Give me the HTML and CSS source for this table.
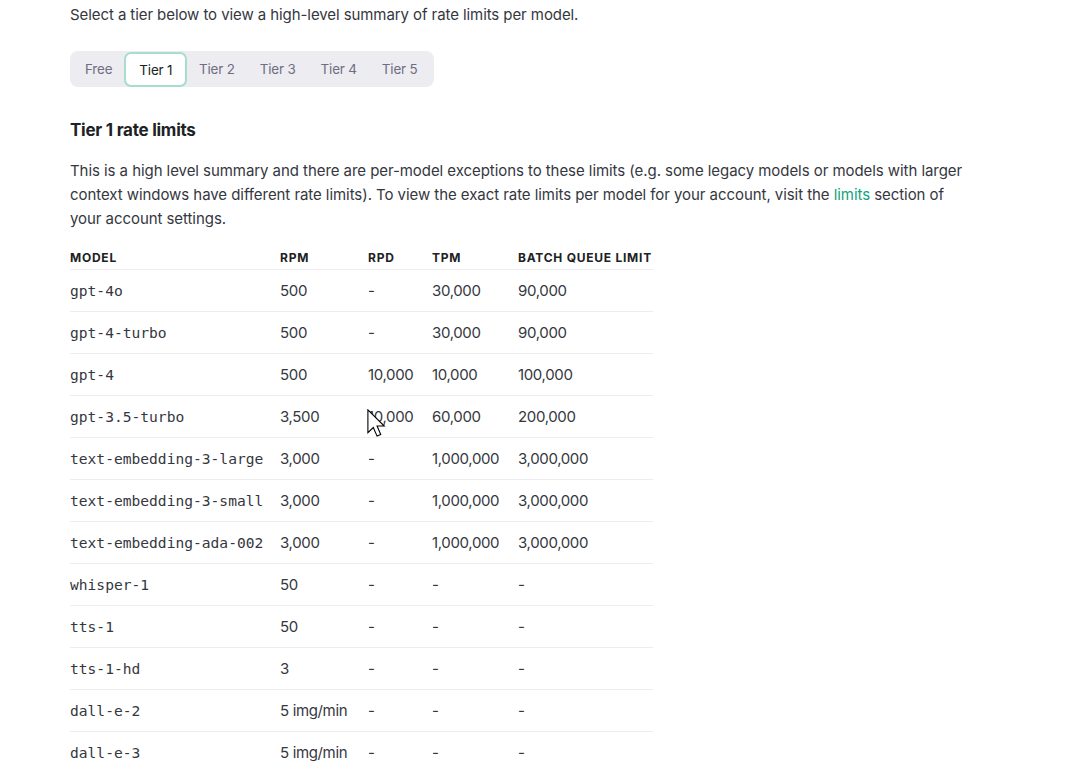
FILE: index.html
```html
<!DOCTYPE html>
<html>
<head>
<meta charset="utf-8">
<link rel="stylesheet" href="styles.css">
</head>
<body>
<main class="doc">
  <p class="intro">Select a tier below to view a high-level summary of rate limits per model.</p>
  <div class="tabs">
    <span class="tab">Free</span>
    <span class="tab active">Tier 1</span>
    <span class="tab">Tier 2</span>
    <span class="tab">Tier 3</span>
    <span class="tab">Tier 4</span>
    <span class="tab">Tier 5</span>
  </div>
  <h3 class="heading">Tier 1 rate limits</h3>
  <p class="body">This is a high level summary and there are per-model exceptions to these limits (e.g. some legacy models or models with larger context windows have different rate limits). To view the exact rate limits per model for your account, visit the <a class="link" href="#">limits</a> section of your account settings.</p>
  <div class="table-wrap">
  <table class="limits">
    <colgroup>
      <col class="c0"><col class="c1"><col class="c2"><col class="c3"><col class="c4">
    </colgroup>
    <thead>
      <tr><th>Model</th><th>RPM</th><th>RPD</th><th>TPM</th><th>Batch queue limit</th></tr>
    </thead>
    <tbody>
      <tr><td><code>gpt-4o</code></td><td>500</td><td>-</td><td>30,000</td><td>90,000</td></tr>
      <tr><td><code>gpt-4-turbo</code></td><td>500</td><td>-</td><td>30,000</td><td>90,000</td></tr>
      <tr><td><code>gpt-4</code></td><td>500</td><td>10,000</td><td>10,000</td><td>100,000</td></tr>
      <tr><td><code>gpt-3.5-turbo</code></td><td>3,500</td><td>10,000</td><td>60,000</td><td>200,000</td></tr>
      <tr><td><code>text-embedding-3-large</code></td><td>3,000</td><td>-</td><td>1,000,000</td><td>3,000,000</td></tr>
      <tr><td><code>text-embedding-3-small</code></td><td>3,000</td><td>-</td><td>1,000,000</td><td>3,000,000</td></tr>
      <tr><td><code>text-embedding-ada-002</code></td><td>3,000</td><td>-</td><td>1,000,000</td><td>3,000,000</td></tr>
      <tr><td><code>whisper-1</code></td><td>50</td><td>-</td><td>-</td><td>-</td></tr>
      <tr><td><code>tts-1</code></td><td>50</td><td>-</td><td>-</td><td>-</td></tr>
      <tr><td><code>tts-1-hd</code></td><td>3</td><td>-</td><td>-</td><td>-</td></tr>
      <tr><td><code>dall-e-2</code></td><td>5 img/min</td><td>-</td><td>-</td><td>-</td></tr>
      <tr><td><code>dall-e-3</code></td><td>5 img/min</td><td>-</td><td>-</td><td>-</td></tr>
    </tbody>
  </table>
  <svg class="cursor" width="19" height="28" viewBox="0 0 13 19.2"><path d="M0.6 0.6 L0.6 16.2 L4.3 12.7 L6.9 18.6 L9.4 17.5 L6.9 11.7 L11.8 11.7 Z" fill="#fff" stroke="#000" stroke-width="0.75" stroke-linejoin="miter"/></svg>
  </div>
</main>
</body>
</html>
```

FILE: styles.css
```css
html, body {
  margin: 0;
  padding: 0;
  background: #ffffff;
}
body {
  font-family: "Inter", "Liberation Sans", sans-serif;
  color: #353740;
  font-size: 15px;
  line-height: 24px;
}
.doc {
  padding: 3px 0 0 70px;
}
.intro {
  margin: 0;
  letter-spacing: -0.08px;
}
.tabs {
  display: inline-flex;
  align-items: stretch;
  margin-top: 24px;
  height: 36px;
  background: #ececf1;
  border-radius: 8px;
  padding: 0;
  box-sizing: border-box;
}
.tab {
  display: flex;
  align-items: center;
  padding: 0 12.5px;
  font-size: 13.4px;
  color: #6e6e80;
  letter-spacing: -0.15px;
}
.tab:first-child { padding-left: 15px; padding-right: 12px; }
.tab:last-child { padding-right: 16px; }
.tab.active {
  background: #ffffff;
  color: #202123;
  border: 2px solid #a8dccf;
  border-radius: 7px;
  padding: 0 13px;
  margin-top: 1px;
  margin-right: -1px;
  box-sizing: border-box;
}
.heading {
  margin: 31px 0 0 0;
  font-size: 17px;
  font-weight: 700;
  color: #202123;
  line-height: 24px;
  letter-spacing: -0.25px;
}
.body {
  margin: 17px 0 0 0;
  max-width: 895px;
  letter-spacing: -0.06px;
}
.link {
  color: #10a37f;
  text-decoration: none;
}
.table-wrap {
  position: relative;
  margin-top: 15px;
}
.limits {
  border-collapse: collapse;
  table-layout: fixed;
  width: 583px;
}
.c0 { width: 210px; }
.c1 { width: 88px; }
.c2 { width: 64px; }
.c3 { width: 86px; }
.c4 { width: 135px; }
.limits th {
  text-align: left;
  font-size: 12px;
  line-height: 16px;
  font-weight: 700;
  text-transform: uppercase;
  letter-spacing: 0.75px;
  color: #202123;
  height: 23px;
  padding: 0;
  border-bottom: 1px solid #ececf1;
  vertical-align: middle;
  white-space: nowrap;
}
.limits td {
  height: 41px;
  padding: 0;
  border-bottom: 1px solid #ececf1;
  font-size: 15px;
  letter-spacing: -0.35px;
  color: #353740;
  vertical-align: middle;
  white-space: nowrap;
}
.limits tbody tr:last-child td { border-bottom: none; }
code {
  font-family: "DejaVu Sans Mono", "Liberation Mono", monospace;
  font-size: 14.6px;
  letter-spacing: 0;
  color: #353740;
}
.cursor {
  position: absolute;
  left: 297px;
  top: 163px;
}
```
